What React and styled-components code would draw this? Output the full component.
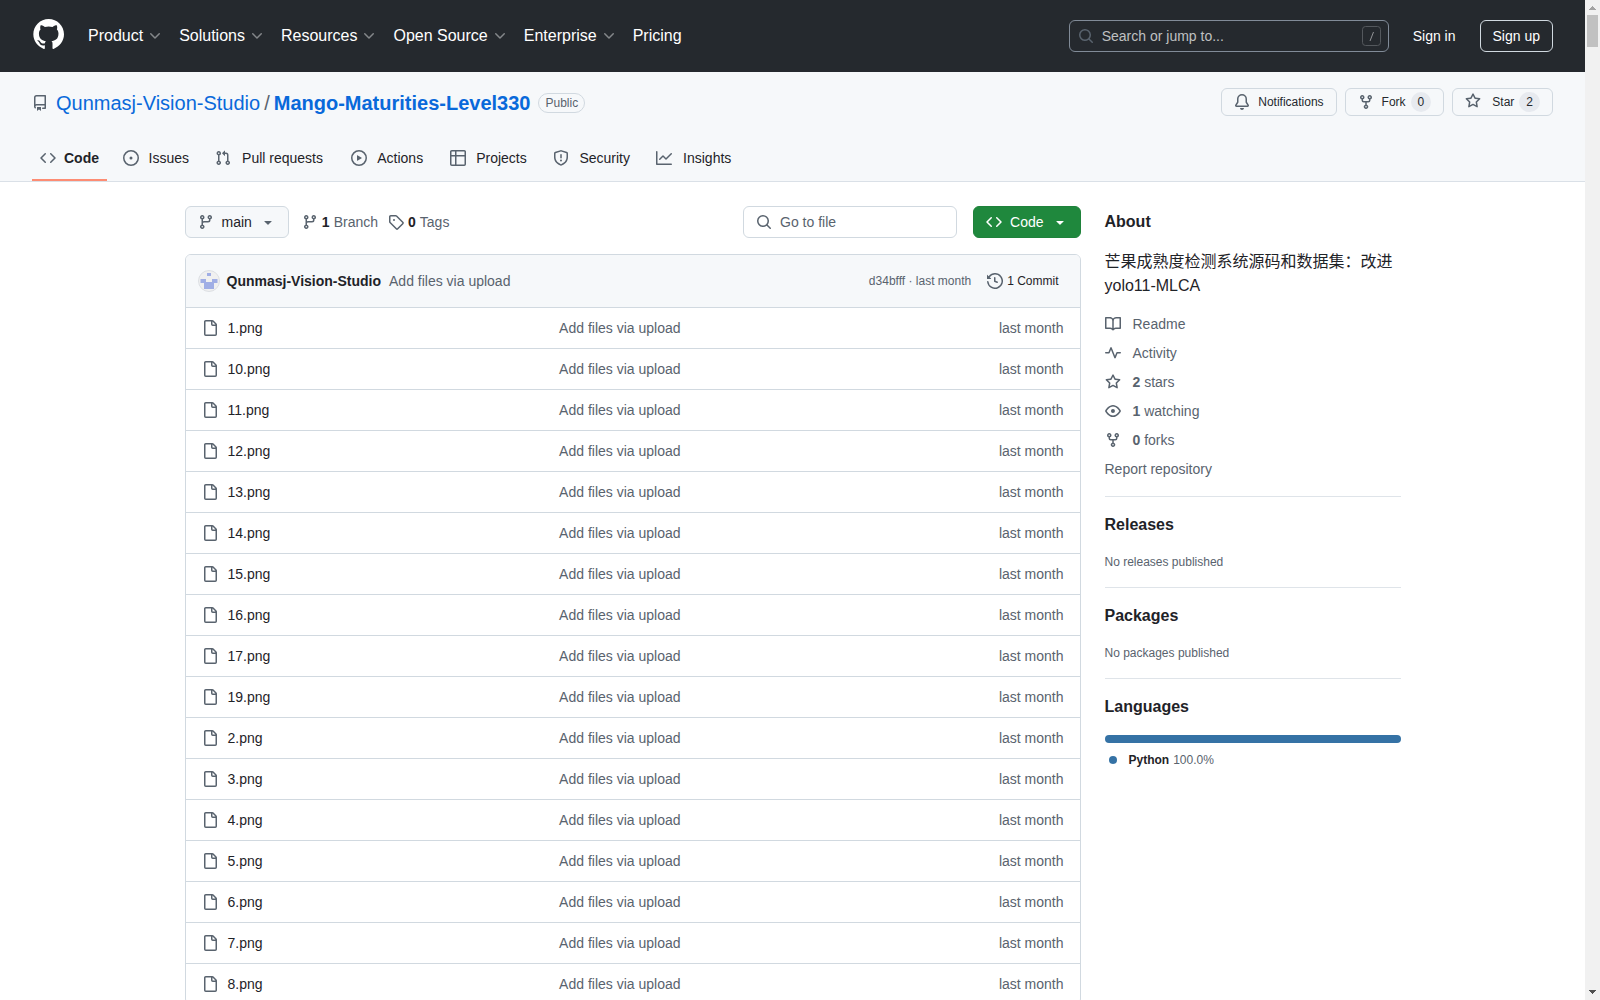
import styled, { createGlobalStyle } from "styled-components";

const GlobalStyle = createGlobalStyle`
  * {
    box-sizing: border-box;
  }
  body {
    margin: 0;
    background: #ffffff;
    color: #1f2328;
    font-family: "Liberation Sans", "Noto Sans CJK SC", sans-serif;
    font-size: 14px;
    line-height: 21px;
  }
  a {
    color: inherit;
    text-decoration: none;
  }
  button,
  input {
    font: inherit;
    color: inherit;
  }
  h1,
  h2,
  p,
  ul {
    margin: 0;
    padding: 0;
  }
  ul {
    list-style: none;
  }
`;

const paths = {
  repo: "M2 2.5A2.5 2.5 0 0 1 4.5 0h8.75a.75.75 0 0 1 .75.75v12.5a.75.75 0 0 1-.75.75h-2.5a.75.75 0 0 1 0-1.5h1.75v-2h-8a1 1 0 0 0-.714 1.7.75.75 0 1 1-1.072 1.05A2.495 2.495 0 0 1 2 11.5Zm10.5-1h-8a1 1 0 0 0-1 1v6.708A2.486 2.486 0 0 1 4.5 9h8ZM5 12.25a.25.25 0 0 1 .25-.25h3.5a.25.25 0 0 1 .25.25v3.25a.25.25 0 0 1-.4.2l-1.45-1.087a.249.249 0 0 0-.3 0L5.4 15.7a.25.25 0 0 1-.4-.2Z",
  code: "m11.28 3.22 4.25 4.25a.75.75 0 0 1 0 1.06l-4.25 4.25a.749.749 0 0 1-1.275-.326.749.749 0 0 1 .215-.734L13.94 8l-3.72-3.72a.749.749 0 0 1 .326-1.275.749.749 0 0 1 .734.215Zm-6.56 0a.751.751 0 0 1 1.042.018.751.751 0 0 1 .018 1.042L2.06 8l3.72 3.72a.749.749 0 0 1-.326 1.275.749.749 0 0 1-.734-.215L.47 8.53a.75.75 0 0 1 0-1.06Z",
  issue:
    "M8 9.5a1.5 1.5 0 1 0 0-3 1.5 1.5 0 0 0 0 3ZM8 0a8 8 0 1 1 0 16A8 8 0 0 1 8 0ZM1.5 8a6.5 6.5 0 1 0 13 0 6.5 6.5 0 0 0-13 0Z",
  pull: "M1.5 3.25a2.25 2.25 0 1 1 3 2.122v5.256a2.251 2.251 0 1 1-1.5 0V5.372A2.25 2.25 0 0 1 1.5 3.25Zm5.677-.177L9.573.677A.25.25 0 0 1 10 .854V2.5h1A2.5 2.5 0 0 1 13.5 5v5.628a2.251 2.251 0 1 1-1.5 0V5a1 1 0 0 0-1-1h-1v1.646a.25.25 0 0 1-.427.177L7.177 3.427a.25.25 0 0 1 0-.354ZM3.75 2.5a.75.75 0 1 0 0 1.5.75.75 0 0 0 0-1.5Zm0 9.5a.75.75 0 1 0 0 1.5.75.75 0 0 0 0-1.5Zm8.25.75a.75.75 0 1 0 1.5 0 .75.75 0 0 0-1.5 0Z",
  play: "M8 0a8 8 0 1 1 0 16A8 8 0 0 1 8 0ZM1.5 8a6.5 6.5 0 1 0 13 0 6.5 6.5 0 0 0-13 0Zm4.879-2.773 4.264 2.559a.25.25 0 0 1 0 .428l-4.264 2.559A.25.25 0 0 1 6 10.559V5.442a.25.25 0 0 1 .379-.215Z",
  table:
    "M0 1.75C0 .784.784 0 1.75 0h12.5C15.216 0 16 .784 16 1.75v12.5A1.75 1.75 0 0 1 14.25 16H1.75A1.75 1.75 0 0 1 0 14.25ZM6.5 6.5v8h7.75a.25.25 0 0 0 .25-.25V6.5Zm8-1.5V1.75a.25.25 0 0 0-.25-.25H6.5V5Zm-13 1.5v7.75c0 .138.112.25.25.25H5v-8ZM5 5V1.5H1.75a.25.25 0 0 0-.25.25V5Z",
  shield:
    "M7.467.133a1.748 1.748 0 0 1 1.066 0l5.25 1.68A1.75 1.75 0 0 1 15 3.48V7c0 1.566-.32 3.182-1.303 4.682-.983 1.498-2.585 2.813-5.032 3.855a1.697 1.697 0 0 1-1.33 0c-2.447-1.042-4.049-2.357-5.032-3.855C1.32 10.182 1 8.566 1 7V3.48a1.75 1.75 0 0 1 1.217-1.667Zm.61 1.429a.25.25 0 0 0-.153 0l-5.25 1.68a.25.25 0 0 0-.174.238V7c0 1.358.275 2.666 1.057 3.86.784 1.194 2.121 2.34 4.366 3.297a.196.196 0 0 0 .154 0c2.245-.956 3.582-2.104 4.366-3.298C13.225 9.666 13.5 8.36 13.5 7V3.48a.251.251 0 0 0-.174-.237l-5.25-1.68ZM8.75 4.75v3a.75.75 0 0 1-1.5 0v-3a.75.75 0 0 1 1.5 0ZM9 10.5a1 1 0 1 1-2 0 1 1 0 0 1 2 0Z",
  graph:
    "M1.5 1.75V13.5h13.75a.75.75 0 0 1 0 1.5H.75a.75.75 0 0 1-.75-.75V1.75a.75.75 0 0 1 1.5 0Zm14.28 2.53-5.25 5.25a.75.75 0 0 1-1.06 0L7 7.06 4.28 9.78a.751.751 0 0 1-1.042-.018.751.751 0 0 1-.018-1.042l3.25-3.25a.75.75 0 0 1 1.06 0L10 7.94l4.72-4.72a.751.751 0 0 1 1.042.018.751.751 0 0 1 .018 1.042Z",
  bell: "M8 16a2 2 0 0 0 1.985-1.75c.017-.137-.097-.25-.235-.25h-3.5c-.138 0-.252.113-.235.25A2 2 0 0 0 8 16ZM3 5a5 5 0 0 1 10 0v2.947c0 .05.015.098.042.139l1.703 2.555A1.519 1.519 0 0 1 13.482 13H2.518a1.516 1.516 0 0 1-1.263-2.36l1.703-2.554A.255.255 0 0 0 3 7.947Zm5-3.5A3.5 3.5 0 0 0 4.5 5v2.947c0 .346-.102.683-.294.97l-1.703 2.556a.017.017 0 0 0-.003.01l.001.006c0 .002.002.004.004.006l.006.004.007.001h10.964l.007-.001.006-.004.004-.006.001-.007a.017.017 0 0 0-.003-.01l-1.703-2.554a1.745 1.745 0 0 1-.294-.97V5A3.5 3.5 0 0 0 8 1.5Z",
  fork: "M5 5.372v.878c0 .414.336.75.75.75h4.5a.75.75 0 0 0 .75-.75v-.878a2.25 2.25 0 1 1 1.5 0v.878a2.25 2.25 0 0 1-2.25 2.25h-1.5v2.128a2.251 2.251 0 1 1-1.5 0V8.5h-1.5A2.25 2.25 0 0 1 3.5 6.25v-.878a2.25 2.25 0 1 1 1.5 0ZM5 3.25a.75.75 0 1 0-1.5 0 .75.75 0 0 0 1.5 0Zm6.75.75a.75.75 0 1 0 0-1.5.75.75 0 0 0 0 1.5Zm-3 8.75a.75.75 0 1 0-1.5 0 .75.75 0 0 0 1.5 0Z",
  star: "M8 .25a.75.75 0 0 1 .673.418l1.882 3.815 4.21.612a.75.75 0 0 1 .416 1.279l-3.046 2.97.719 4.192a.751.751 0 0 1-1.088.791L8 12.347l-3.766 1.98a.75.75 0 0 1-1.088-.79l.72-4.194L.818 6.374a.75.75 0 0 1 .416-1.28l4.21-.611L7.327.668A.75.75 0 0 1 8 .25Zm0 2.445L6.615 5.5a.75.75 0 0 1-.564.41l-3.097.45 2.24 2.184a.75.75 0 0 1 .216.664l-.528 3.084 2.769-1.456a.75.75 0 0 1 .698 0l2.77 1.456-.53-3.084a.75.75 0 0 1 .216-.664l2.24-2.183-3.096-.45a.75.75 0 0 1-.564-.41L8 2.694Z",
  branch:
    "M9.5 3.25a2.25 2.25 0 1 1 3 2.122V6A2.5 2.5 0 0 1 10 8.5H6a1 1 0 0 0-1 1v1.128a2.251 2.251 0 1 1-1.5 0V5.372a2.25 2.25 0 1 1 1.5 0v1.836A2.493 2.493 0 0 1 6 7h4a1 1 0 0 0 1-1v-.628A2.25 2.25 0 0 1 9.5 3.25Zm-6 0a.75.75 0 1 0 1.5 0 .75.75 0 0 0-1.5 0Zm8.25-.75a.75.75 0 1 0 0 1.5.75.75 0 0 0 0-1.5ZM4.25 12a.75.75 0 1 0 0 1.5.75.75 0 0 0 0-1.5Z",
  tag: "M1 7.775V2.75C1 1.784 1.784 1 2.75 1h5.025c.464 0 .91.184 1.238.513l6.25 6.25a1.75 1.75 0 0 1 0 2.474l-5.026 5.026a1.75 1.75 0 0 1-2.474 0l-6.25-6.25A1.752 1.752 0 0 1 1 7.775Zm1.5 0c0 .066.026.13.073.177l6.25 6.25a.25.25 0 0 0 .354 0l5.025-5.025a.25.25 0 0 0 0-.354l-6.25-6.25a.25.25 0 0 0-.177-.073H2.75a.25.25 0 0 0-.25.25ZM6 5a1 1 0 1 1 0 2 1 1 0 0 1 0-2Z",
  search:
    "M10.68 11.74a6 6 0 0 1-7.922-8.982 6 6 0 0 1 8.982 7.922l3.04 3.04a.749.749 0 0 1-.326 1.275.749.749 0 0 1-.734-.215ZM11.5 7a4.499 4.499 0 1 0-8.997 0A4.499 4.499 0 0 0 11.5 7Z",
  history:
    "m.427 1.927 1.215 1.215a8.002 8.002 0 1 1-1.6 5.685.75.75 0 1 1 1.493-.154 6.5 6.5 0 1 0 1.18-4.458l1.358 1.358A.25.25 0 0 1 3.896 6H.25A.25.25 0 0 1 0 5.75V2.104a.25.25 0 0 1 .427-.177ZM7.75 4a.75.75 0 0 1 .75.75v2.992l2.028.812a.75.75 0 0 1-.557 1.392l-2.5-1A.751.751 0 0 1 7 8.25v-3.5A.75.75 0 0 1 7.75 4Z",
  file: "M2 1.75C2 .784 2.784 0 3.75 0h6.586c.464 0 .909.184 1.237.513l2.914 2.914c.329.328.513.773.513 1.237v9.586A1.75 1.75 0 0 1 13.25 16h-9.5A1.75 1.75 0 0 1 2 14.25Zm1.75-.25a.25.25 0 0 0-.25.25v12.5c0 .138.112.25.25.25h9.5a.25.25 0 0 0 .25-.25V6h-2.75A1.75 1.75 0 0 1 9 4.25V1.5Zm6.75.062V4.25c0 .138.112.25.25.25h2.688l-.011-.013-2.914-2.914-.013-.011Z",
  book: "M0 1.75A.75.75 0 0 1 .75 1h4.253c1.227 0 2.317.59 3 1.501A3.743 3.743 0 0 1 11.006 1h4.245a.75.75 0 0 1 .75.75v10.5a.75.75 0 0 1-.75.75h-4.507a2.25 2.25 0 0 0-1.591.659l-.622.621a.75.75 0 0 1-1.06 0l-.622-.621A2.25 2.25 0 0 0 5.258 13H.75a.75.75 0 0 1-.75-.75Zm7.251 10.324.004-5.073-.002-2.253A2.25 2.25 0 0 0 5.003 2.5H1.5v9h3.757a3.75 3.75 0 0 1 1.994.574ZM8.755 4.75l-.004 7.322a3.752 3.752 0 0 1 1.992-.572H14.5v-9h-3.495a2.25 2.25 0 0 0-2.25 2.25Z",
  pulse:
    "M6 2c.306 0 .582.187.696.471L10 10.731l1.304-3.26A.751.751 0 0 1 12 7h3.25a.75.75 0 0 1 0 1.5h-2.742l-1.812 4.528a.751.751 0 0 1-1.392 0L6 4.77 4.696 8.03A.75.75 0 0 1 4 8.5H.75a.75.75 0 0 1 0-1.5h2.742l1.812-4.529A.751.751 0 0 1 6 2Z",
  eye: "M8 2c1.981 0 3.671.992 4.933 2.078 1.27 1.091 2.187 2.345 2.637 3.023a1.62 1.62 0 0 1 0 1.798c-.45.678-1.367 1.932-2.637 3.023C11.67 13.008 9.981 14 8 14c-1.981 0-3.671-.992-4.933-2.078C1.797 10.83.88 9.576.43 8.898a1.62 1.62 0 0 1 0-1.798c.45-.677 1.367-1.931 2.637-3.022C4.33 2.992 6.019 2 8 2ZM1.679 7.932a.12.12 0 0 0 0 .136c.411.622 1.241 1.75 2.366 2.717C5.176 11.758 6.527 12.5 8 12.5c1.473 0 2.825-.742 3.955-1.715 1.124-.967 1.954-2.096 2.366-2.717a.12.12 0 0 0 0-.136c-.412-.621-1.242-1.75-2.366-2.717C10.824 4.242 9.473 3.5 8 3.5c-1.473 0-2.825.742-3.955 1.715-1.124.967-1.954 2.096-2.366 2.717ZM8 10a2 2 0 1 1-.001-3.999A2 2 0 0 1 8 10Z",
  chevron:
    "M12.78 5.22a.749.749 0 0 1 0 1.06l-4.25 4.25a.749.749 0 0 1-1.06 0L3.22 6.28a.749.749 0 1 1 1.06-1.06L8 8.939l3.72-3.719a.749.749 0 0 1 1.06 0Z",
  triangle:
    "m4.427 7.427 3.396 3.396a.25.25 0 0 0 .354 0l3.396-3.396A.25.25 0 0 0 11.396 7H4.604a.25.25 0 0 0-.177.427Z",
};

const Svg = styled.svg`
  flex: none;
  display: block;
  fill: ${(props) => props.$color || "#59636e"};
`;

const Icon = ({ name, color }) => (
  <Svg width="16" height="16" viewBox="0 0 16 16" $color={color} aria-hidden="true">
    <path d={paths[name]} />
  </Svg>
);

const Shell = styled.div`
  display: flex;
  height: 100vh;
  overflow: hidden;
`;

const Page = styled.div`
  flex: 1;
  min-width: 0;
  overflow: hidden;
`;

const Header = styled.header`
  display: flex;
  align-items: center;
  justify-content: space-between;
  height: 72px;
  padding: 0 32px;
  background: #25292e;
  color: #ffffff;
`;

const HeaderSide = styled.div`
  display: flex;
  align-items: center;
  gap: ${(props) => props.$gap};
`;

const HomeLink = styled.a`
  display: block;
  height: 36px;
`;

const Nav = styled.nav`
  display: flex;
`;

const NavButton = styled.button`
  display: flex;
  align-items: center;
  gap: 4px;
  padding: 0 8px;
  border: 0;
  background: none;
  font-size: 16px;
  line-height: 24px;
`;

const NavLink = styled.a`
  padding: 0 8px;
  font-size: 16px;
  line-height: 24px;
`;

const SearchBox = styled.label`
  display: flex;
  align-items: center;
  gap: 8px;
  width: ${(props) => props.$width};
  height: 32px;
  padding: ${(props) => (props.$dark ? "0 6px 0 8px" : "0 12px")};
  border: 1px solid ${(props) => (props.$dark ? "#818b98" : "#d1d9e0")};
  border-radius: 6px;
`;

const SearchInput = styled.input`
  flex: 1;
  min-width: 0;
  padding: 0;
  border: 0;
  outline: 0;
  background: none;
  &::placeholder {
    color: ${(props) => (props.$dark ? "#bfc0c1" : "#59636e")};
    opacity: 1;
  }
`;

const SignUp = styled.a`
  height: 32px;
  padding: 0 12px;
  border: 1px solid #d1d9e0;
  border-radius: 6px;
  line-height: 30px;
`;

const RepoHead = styled.section`
  padding: 16px 32px 0;
  border-bottom: 1px solid #dae0e7;
  background: #f6f8fa;
`;

const TitleRow = styled.div`
  display: flex;
  justify-content: space-between;
  align-items: flex-start;
  margin-bottom: 16px;
`;

const Title = styled.h1`
  display: flex;
  align-items: center;
  font-size: 20px;
  line-height: 30px;
  font-weight: 400;
  color: #59636e;
`;

const TitleLink = styled.a`
  margin-left: ${(props) => (props.$strong ? "0" : "8px")};
  color: #0969da;
  font-weight: ${(props) => (props.$strong ? 700 : 400)};
`;

const Slash = styled.span`
  margin: 0 4px;
`;

const Pill = styled.span`
  margin-left: 8px;
  padding: 0 6px;
  border: 1px solid #d1d9e0;
  border-radius: 10px;
  font-size: 12px;
  line-height: 18px;
`;

const Actions = styled.div`
  display: flex;
  gap: 8px;
`;

const ActionButton = styled.button`
  display: flex;
  align-items: center;
  gap: 8px;
  height: 28px;
  padding: 0 12px;
  border: 1px solid #d1d9e0;
  border-radius: 6px;
  background: #f6f8fa;
  color: #25292e;
  font-size: 12px;
  line-height: 18px;
`;

const StarButton = styled(ActionButton)`
  svg {
    margin: 0 3px 2px 0;
  }
`;

const Counter = styled.span`
  min-width: 20px;
  padding: 0 7px;
  margin-left: -3px;
  border-radius: 10px;
  background: #e7eaef;
  line-height: 20px;
  text-align: center;
`;

const Tabs = styled.nav`
  display: flex;
  gap: 8px;
  height: 47px;
`;

const Tab = styled.a`
  display: flex;
  align-items: center;
  gap: 8px;
  padding: 3px 8px 0;
  border-bottom: 2px solid ${(props) => (props.$active ? "#fd8c73" : "transparent")};
  font-weight: ${(props) => (props.$active ? 700 : 400)};
`;

/* the hidden bold copy keeps a tab's width the same when it is selected */
const TabLabel = styled.span`
  text-align: center;
  &::before {
    content: attr(data-content);
    display: block;
    height: 0;
    overflow: hidden;
    visibility: hidden;
    font-weight: 700;
  }
`;

const Layout = styled.div`
  display: flex;
  gap: 24px;
  max-width: 1280px;
  margin: 0 auto;
  padding: 24px 32px;
`;

const Main = styled.main`
  flex: 1;
  min-width: 0;
`;

const Toolbar = styled.div`
  display: flex;
  align-items: center;
  justify-content: space-between;
  margin-bottom: 16px;
`;

const ToolbarGroup = styled.div`
  display: flex;
  align-items: center;
  gap: ${(props) => props.$gap};
`;

const BranchButton = styled.button`
  display: flex;
  align-items: center;
  gap: 8px;
  height: 32px;
  padding: 0 12px;
  margin-right: 3px;
  border: 1px solid #d1d9e0;
  border-radius: 6px;
  background: #f6f8fa;
`;

const CountLink = styled.a`
  display: flex;
  align-items: center;
  gap: 4px;
  color: #59636e;
  strong {
    color: #1f2328;
  }
`;

const CodeButton = styled.button`
  display: flex;
  align-items: center;
  gap: 8px;
  height: 32px;
  padding: 0 12px;
  border: 1px solid #1f823b;
  border-radius: 6px;
  background: #1f883d;
  color: #ffffff;
`;

const Files = styled.div`
  border: 1px solid #d1d9e0;
  border-radius: 6px;
  overflow: hidden;
`;

const CommitBar = styled.div`
  display: flex;
  align-items: center;
  gap: 8px;
  height: 52px;
  padding: 0 21px 0 12px;
  background: #f6f8fa;
  color: #59636e;
`;

const Author = styled.a`
  display: flex;
  align-items: center;
  gap: 7px;
  color: #1f2328;
  font-weight: 700;
`;

const CommitMeta = styled.div`
  display: flex;
  align-items: center;
  gap: 16px;
  margin-left: auto;
  font-size: 12px;
`;

const HistoryLink = styled.a`
  display: flex;
  align-items: center;
  gap: 4px;
  color: #1f2328;
`;

const FileTable = styled.table`
  width: 100%;
  table-layout: fixed;
  border-spacing: 0;
`;

const Cell = styled.td`
  width: ${(props) => props.$width || "auto"};
  height: 41px;
  padding: 0 16px;
  border-top: 1px solid #d1d9e0;
  color: #59636e;
  text-align: ${(props) => props.$align || "left"};
`;

const FileName = styled.a`
  display: flex;
  align-items: center;
  gap: 10px;
  color: #1f2328;
`;

const Sidebar = styled.aside`
  flex: none;
  width: 296px;
  padding-top: 4px;
`;

const Section = styled.section`
  & + & {
    margin-top: 16px;
    padding-top: 16px;
    border-top: 1px solid #dfe4e9;
  }
`;

const SectionTitle = styled.h2`
  margin-bottom: 16px;
  font-size: 16px;
  line-height: 24px;
`;

const Description = styled.p`
  margin-bottom: 16px;
  font-size: 16px;
  line-height: 24px;
`;

const InfoList = styled.ul`
  display: flex;
  flex-direction: column;
  gap: 8px;
  color: #59636e;
`;

const InfoLink = styled.a`
  display: flex;
  align-items: flex-start;
  gap: 12px;
  svg {
    margin-top: 2px;
  }
`;

const Note = styled.p`
  color: #59636e;
  font-size: 12px;
  line-height: 18px;
`;

const LanguageBar = styled.div`
  height: 8px;
  margin-bottom: 8px;
  border-radius: 6px;
  background: #3572a5;
`;

const Language = styled.a`
  display: flex;
  align-items: center;
  gap: 4px;
  color: #59636e;
  font-size: 12px;
  line-height: 18px;
  strong {
    color: #1f2328;
  }
`;

const Dot = styled.span`
  width: 8px;
  height: 8px;
  margin: 0 8px 0 4px;
  border-radius: 50%;
  background: #3572a5;
`;

const Scrollbar = styled.div`
  display: flex;
  flex-direction: column;
  align-items: center;
  width: 15px;
  background: #f1f1f1;
`;

const Thumb = styled.div`
  flex: none;
  width: 11px;
  height: 32px;
  margin-bottom: auto;
  background: #c1c1c1;
`;

const navItems = ["Product", "Solutions", "Resources", "Open Source", "Enterprise"];

const tabs = [
  { icon: "code", label: "Code", active: true },
  { icon: "issue", label: "Issues" },
  { icon: "pull", label: "Pull requests" },
  { icon: "play", label: "Actions" },
  { icon: "table", label: "Projects" },
  { icon: "shield", label: "Security" },
  { icon: "graph", label: "Insights" },
];

const files = [1, 10, 11, 12, 13, 14, 15, 16, 17, 19, 2, 3, 4, 5, 6, 7, 8];

const info = [
  { icon: "book", label: "Readme" },
  { icon: "pulse", label: "Activity" },
  { icon: "star", count: 2, label: "stars" },
  { icon: "eye", count: 1, label: "watching" },
  { icon: "fork", count: 0, label: "forks" },
];

const Logo = () => (
  <Svg width="32" height="32" viewBox="0 0 24 24" $color="#ffffff" aria-hidden="true">
    <path d="M12.5.75C6.146.75 1 5.896 1 12.25c0 5.089 3.292 9.387 7.863 10.91.575.101.79-.244.79-.546 0-.273-.014-1.178-.014-2.142-2.889.532-3.636-.704-3.866-1.35-.13-.331-.69-1.352-1.18-1.625-.402-.216-.977-.748-.014-.762.906-.014 1.553.834 1.769 1.179 1.035 1.74 2.688 1.25 3.349.948.1-.747.402-1.25.733-1.538-2.559-.287-5.232-1.279-5.232-5.678 0-1.25.445-2.285 1.178-3.09-.115-.288-.517-1.467.115-3.048 0 0 .963-.302 3.163 1.179.92-.259 1.897-.388 2.875-.388.977 0 1.955.13 2.875.388 2.2-1.495 3.162-1.179 3.162-1.179.633 1.581.23 2.76.115 3.048.733.805 1.179 1.825 1.179 3.09 0 4.413-2.688 5.39-5.247 5.678.417.36.776 1.05.776 2.128 0 1.538-.014 2.774-.014 3.162 0 .302.216.662.79.547C20.709 21.637 24 17.324 24 12.25 24 5.896 18.854.75 12.5.75Z" />
  </Svg>
);

const SlashKey = () => (
  <Svg width="20" height="20" viewBox="0 0 20 20" $color="none" aria-hidden="true">
    <rect x="0.5" y="0.5" width="18" height="19" rx="3" stroke="#54585d" />
    <path d="M11.5 6 8 15" stroke="#919396" />
  </Svg>
);

const Avatar = () => (
  <Svg width="22" height="22" viewBox="0 0 22 22" aria-hidden="true">
    <circle cx="11" cy="11" r="10.5" fill="#f0f0f0" stroke="#dcdfe3" />
    <path d="M9 3h4v3H9zM2.5 9H8v3h6V9h5.5v4H16v6H6v-6H2.5z" fill="#a0aee5" />
  </Svg>
);

const Arrow = ({ down }) => (
  <Svg width="15" height="15" viewBox="0 0 15 15" $color={down ? "#505050" : "#a3a3a3"} aria-hidden="true">
    <path d={down ? "M4 5h7v1h-1v1H9v1H8v1H7V8H6V7H5V6H4z" : "M7 6h1v1h1v1h1v1h1v1H4V9h1V8h1V7h1z"} />
  </Svg>
);

const SiteHeader = () => (
  <Header>
    <HeaderSide $gap="16px">
      <HomeLink href="#" aria-label="Homepage">
        <Logo />
      </HomeLink>
      <Nav>
        {navItems.map((item) => (
          <NavButton key={item} type="button">
            {item}
            <Icon name="chevron" color="#84878a" />
          </NavButton>
        ))}
        <NavLink href="#">Pricing</NavLink>
      </Nav>
    </HeaderSide>
    <HeaderSide $gap="24px">
      <SearchBox $dark $width="320px">
        <Icon name="search" />
        <SearchInput $dark type="text" aria-label="Search" placeholder="Search or jump to..." />
        <SlashKey />
      </SearchBox>
      <a href="#">Sign in</a>
      <SignUp href="#">Sign up</SignUp>
    </HeaderSide>
  </Header>
);

const RepoHeader = () => (
  <RepoHead>
    <TitleRow>
      <Title>
        <Icon name="repo" />
        <TitleLink href="#">Qunmasj-Vision-Studio</TitleLink>
        <Slash>/</Slash>
        <TitleLink href="#" $strong>
          Mango-Maturities-Level330
        </TitleLink>
        <Pill>Public</Pill>
      </Title>
      <Actions>
        <ActionButton type="button">
          <Icon name="bell" />
          Notifications
        </ActionButton>
        <ActionButton type="button">
          <Icon name="fork" />
          Fork
          <Counter>0</Counter>
        </ActionButton>
        <StarButton type="button">
          <Icon name="star" />
          Star
          <Counter>2</Counter>
        </StarButton>
      </Actions>
    </TitleRow>
    <Tabs>
      {tabs.map((tab) => (
        <Tab key={tab.label} href="#" $active={tab.active}>
          <Icon name={tab.icon} />
          <TabLabel data-content={tab.label}>{tab.label}</TabLabel>
        </Tab>
      ))}
    </Tabs>
  </RepoHead>
);

const FileList = () => (
  <Files>
    <CommitBar>
      <Author href="#">
        <Avatar />
        Qunmasj-Vision-Studio
      </Author>
      <a href="#">Add files via upload</a>
      <CommitMeta>
        <span>d34bfff · last month</span>
        <HistoryLink href="#">
          <Icon name="history" />1 Commit
        </HistoryLink>
      </CommitMeta>
    </CommitBar>
    <FileTable>
      <tbody>
        {files.map((file) => (
          <tr key={file}>
            <Cell $width="40%">
              <FileName href="#">
                <Icon name="file" />
                {file}.png
              </FileName>
            </Cell>
            <Cell>
              <a href="#">Add files via upload</a>
            </Cell>
            <Cell $width="136px" $align="right">
              last month
            </Cell>
          </tr>
        ))}
      </tbody>
    </FileTable>
  </Files>
);

const RepoSidebar = () => (
  <Sidebar>
    <Section>
      <SectionTitle>About</SectionTitle>
      <Description>芒果成熟度检测系统源码和数据集：改进yolo11-MLCA</Description>
      <InfoList>
        {info.map((item) => (
          <li key={item.label}>
            <InfoLink href="#">
              <Icon name={item.icon} />
              <span>
                {item.count !== undefined && <strong>{item.count} </strong>}
                {item.label}
              </span>
            </InfoLink>
          </li>
        ))}
        <li>
          <a href="#">Report repository</a>
        </li>
      </InfoList>
    </Section>
    <Section>
      <SectionTitle>Releases</SectionTitle>
      <Note>No releases published</Note>
    </Section>
    <Section>
      <SectionTitle>Packages</SectionTitle>
      <Note>No packages published</Note>
    </Section>
    <Section>
      <SectionTitle>Languages</SectionTitle>
      <LanguageBar />
      <Language href="#">
        <Dot />
        <strong>Python</strong>
        <span>100.0%</span>
      </Language>
    </Section>
  </Sidebar>
);

const App = () => {
  return (
    <Shell>
      <GlobalStyle />
      <Page>
        <SiteHeader />
        <RepoHeader />
        <Layout>
          <Main>
            <Toolbar>
              <ToolbarGroup $gap="10px">
                <BranchButton type="button">
                  <Icon name="branch" />
                  main
                  <Icon name="triangle" />
                </BranchButton>
                <CountLink href="#">
                  <Icon name="branch" />
                  <strong>1</strong> Branch
                </CountLink>
                <CountLink href="#">
                  <Icon name="tag" />
                  <strong>0</strong> Tags
                </CountLink>
              </ToolbarGroup>
              <ToolbarGroup $gap="16px">
                <SearchBox $width="214px">
                  <Icon name="search" />
                  <SearchInput type="text" aria-label="Go to file" placeholder="Go to file" />
                </SearchBox>
                <CodeButton type="button">
                  <Icon name="code" color="#ffffff" />
                  Code
                  <Icon name="triangle" color="#ffffff" />
                </CodeButton>
              </ToolbarGroup>
            </Toolbar>
            <FileList />
          </Main>
          <RepoSidebar />
        </Layout>
      </Page>
      <Scrollbar>
        <Arrow />
        <Thumb />
        <Arrow down />
      </Scrollbar>
    </Shell>
  );
};

export default App;
